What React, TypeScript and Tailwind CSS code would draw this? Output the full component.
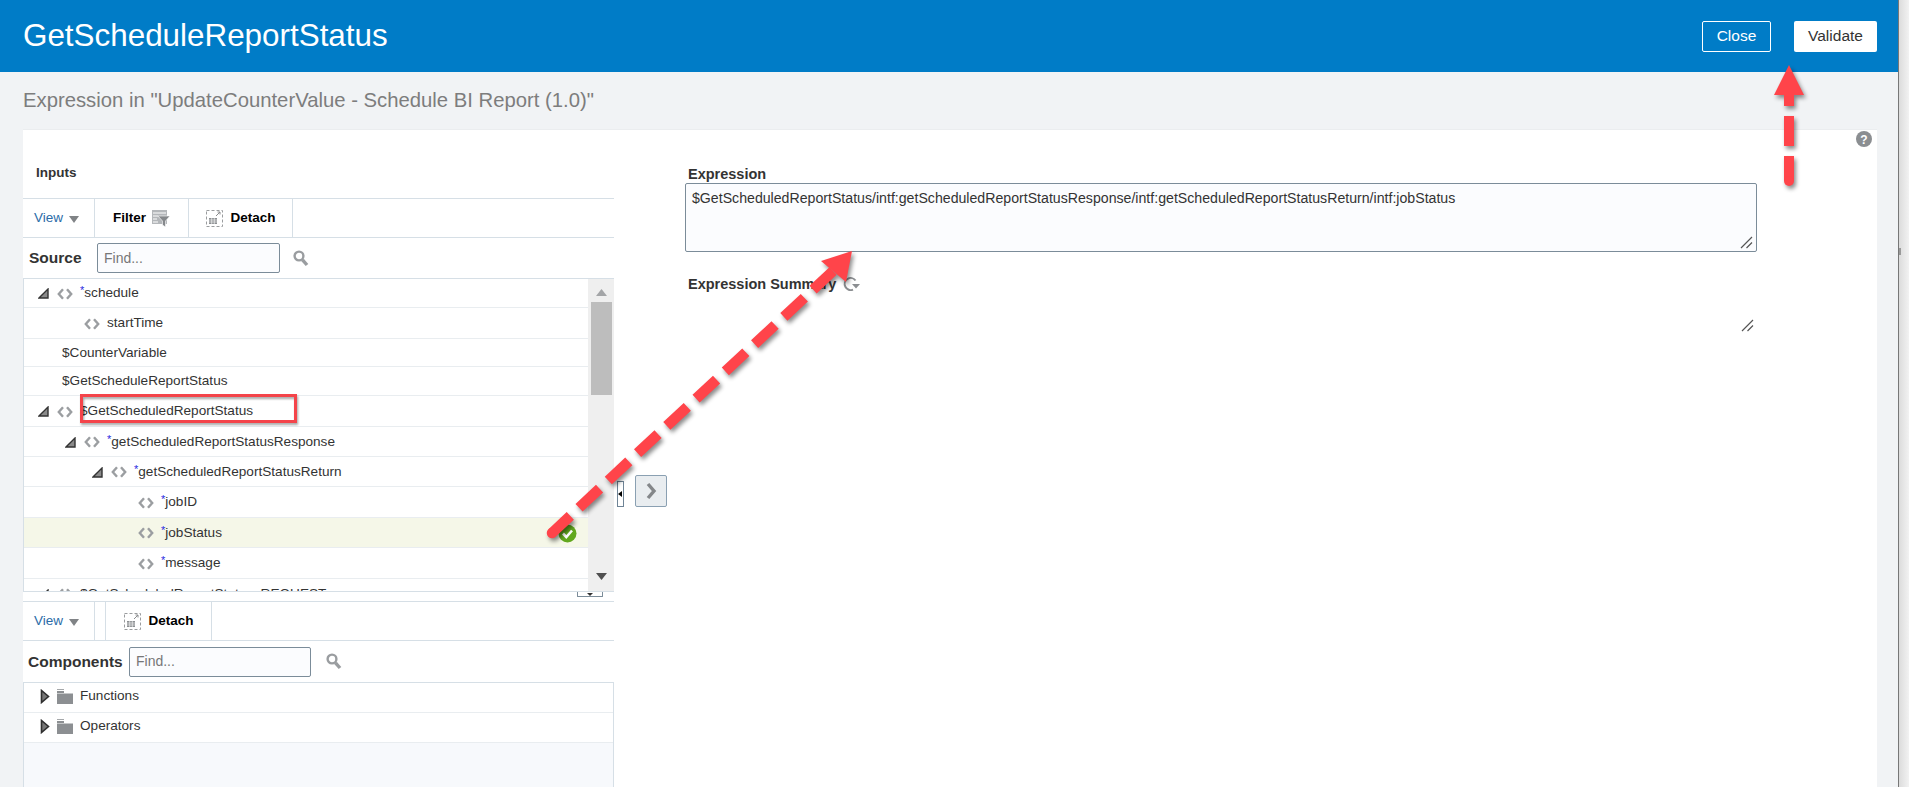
const Angle = ({ className = '' }: { className?: string }) => (
  <svg width="16" height="12" viewBox="0 0 16 12" className={className}>
    <path d="M6 1.2 1.8 6 6 10.8M10 1.2 14.2 6 10 10.8" fill="none" stroke="#9b9ea1" strokeWidth="2.4" />
  </svg>
);

const Expanded = () => (
  <svg width="11" height="11" viewBox="0 0 11 11">
    <path d="M10 1v9H1z" fill="#8a8a8a" stroke="#333" strokeWidth="1.4" />
  </svg>
);

const Collapsed = () => (
  <svg width="10" height="15" viewBox="0 0 10 15">
    <path d="M1.5 1.5v12L8.5 7.5z" fill="#777" stroke="#2f2f2f" strokeWidth="1.6" />
  </svg>
);

const Folder = () => (
  <svg width="16" height="15" viewBox="0 0 16 15">
    <path d="M0 2h7v2H0zM0 4.5h16V15H0z" fill="#8c8f92" />
    <path d="M0 0h7v1H0z" fill="#a5a8aa" />
  </svg>
);

const SearchIcon = () => (
  <svg width="16" height="17" viewBox="0 0 16 17">
    <circle cx="6" cy="6" r="4.4" fill="none" stroke="#9a9da0" strokeWidth="2.4" />
    <path d="M9.5 9.8 14 15" stroke="#9a9da0" strokeWidth="3.4" />
  </svg>
);

const FilterIcon = () => (
  <svg width="18" height="17" viewBox="0 0 18 17">
    <path d="M0 0h15v14H0z" fill="#b4b7ba" />
    <path d="M1 3h13M1 6h5M1 9h4M1 12h5" stroke="#fff" strokeWidth="1" />
    <path d="M6 6h12l-4.5 5v6l-3-2v-4z" fill="#85888b" stroke="#fff" strokeWidth="0.6" />
  </svg>
);

const DetachIcon = () => (
  <svg width="17" height="17" viewBox="0 0 17 17">
    <rect x="0.5" y="0.5" width="16" height="16" fill="none" stroke="#9a9c9e" strokeDasharray="3 2" />
    <path d="M3 8h8v6H3z" fill="#8c8f92" />
    <path d="M3 10h8M3 12h8M5.7 8v6M8.3 8v6" stroke="#fff" strokeWidth="0.6" />
    <path d="M10 6l4-4M11.5 2H14v2.5" fill="none" stroke="#8a8c8e" />
  </svg>
);

const Grip = () => (
  <svg width="13" height="13" viewBox="0 0 13 13">
    <path d="M1 12 12 1M6.5 12 12 6.5" stroke="#555" strokeWidth="1.2" />
  </svg>
);

const ViewMenu = () => (
  <div className="flex h-full w-[72px] items-center border-r border-[#d6dfe6] pl-[11px]">
    <span className="text-[13.5px] text-[#2b6ca8]">View</span>
    <svg width="10" height="7" viewBox="0 0 10 7" className="ml-[6px] mt-[2px]">
      <path d="M0 0h10L5 7z" fill="#808386" />
    </svg>
  </div>
);

const DetachButton = ({ width }: { width: string }) => (
  <div className={`flex h-full items-center justify-center gap-[7px] border-r border-[#d6dfe6] pl-[1px] ${width}`}>
    <DetachIcon />
    <span className="text-[13.5px] font-bold text-black">Detach</span>
  </div>
);

const FindBox = ({ width }: { width: string }) => (
  <div className={`flex h-[30px] items-center rounded-[2px] border border-[#7b8c99] bg-[#fbfcfe] pl-[6px] text-[14px] text-[#777] ${width}`}>
    Find...
  </div>
);

type Row = {
  text: string;
  star?: boolean;
  indent: number;
  kind: 'open' | 'leaf' | 'plain';
  h: string;
  selected?: boolean;
};

const rows: Row[] = [
  { text: 'schedule', star: true, indent: 14, kind: 'open', h: 'h-[29px]' },
  { text: 'startTime', indent: 60, kind: 'leaf', h: 'h-[31px]' },
  { text: '$CounterVariable', indent: 38, kind: 'plain', h: 'h-[28px]' },
  { text: '$GetScheduleReportStatus', indent: 38, kind: 'plain', h: 'h-[29px]' },
  { text: '$GetScheduledReportStatus', indent: 14, kind: 'open', h: 'h-[31px]' },
  { text: 'getScheduledReportStatusResponse', star: true, indent: 41, kind: 'open', h: 'h-[30px]' },
  { text: 'getScheduledReportStatusReturn', star: true, indent: 68, kind: 'open', h: 'h-[30px]' },
  { text: 'jobID', star: true, indent: 114, kind: 'leaf', h: 'h-[31px]' },
  { text: 'jobStatus', star: true, indent: 114, kind: 'leaf', h: 'h-[30px]', selected: true },
  { text: 'message', star: true, indent: 114, kind: 'leaf', h: 'h-[31px]' },
];

const TreeRow = ({ row }: { row: Row }) => (
  <div
    className={`relative flex shrink-0 items-center border-b border-[#e9edf0] pt-[1px] text-[13.6px] text-[#333] ${row.h} ${row.selected ? 'bg-[#f5f7e8]' : ''}`}
    style={{ paddingLeft: row.indent }}
  >
    {row.kind === 'open' && (
      <span className="mr-[8px] flex">
        <Expanded />
      </span>
    )}
    {row.kind !== 'plain' && <Angle className="mr-[7px]" />}
    {row.star && <span className="relative -top-[3px] text-[11px] leading-none text-[#2a2ae0]">*</span>}
    <span>{row.text}</span>
    {row.selected && (
      <svg width="19" height="19" viewBox="0 0 19 19" className="absolute right-[11px] top-[6px]">
        <circle cx="9.5" cy="9.5" r="9" fill="#62a81e" />
        <path d="M5 9.5 8.3 13 14 6.5" fill="none" stroke="#fff" strokeWidth="2.6" />
      </svg>
    )}
  </div>
);

export default function App() {
  return (
    <div className="relative flex h-[787px] w-[1909px] overflow-hidden bg-[#f0f0f0] font-['Liberation_Sans',Arial,sans-serif]">
      <div className="flex w-[1898px] shrink-0 flex-col bg-[#f1f3f5]">
        <header className="flex h-[72px] shrink-0 items-center justify-between bg-[#007cc7] pl-[23px] pr-[21px]">
          <h1 className="text-[31.4px] text-white">GetScheduleReportStatus</h1>
          <div className="flex gap-[23px]">
            <button className="h-[31px] w-[69px] rounded-[2px] border border-white text-[15.5px] text-white">Close</button>
            <button className="h-[31px] w-[83px] rounded-[2px] bg-white text-[15.5px] text-[#333]">Validate</button>
          </div>
        </header>

        <div className="flex h-[57px] shrink-0 items-center pl-[23px] text-[20.3px] text-[#7d7d7d]">
          Expression in "UpdateCounterValue - Schedule BI Report (1.0)"
        </div>

        <main className="relative ml-[23px] mr-[21px] flex min-h-0 flex-1 border-t border-[#ebedef] bg-white">
          <svg width="16" height="16" viewBox="0 0 16 16" className="absolute right-[5px] top-[1px]">
            <circle cx="8" cy="8" r="8" fill="#8b8e91" />
            <text x="8" y="12.5" textAnchor="middle" fontSize="12" fontWeight="700" fill="#fff">?</text>
          </svg>

          {/* inputs + components */}
          <section className="flex w-[591px] shrink-0 flex-col">
            <div className="h-[69px] shrink-0 border-b border-[#d6dfe6] pl-[13px] pt-[35px] text-[13.5px] font-bold leading-[16px] text-[#333]">
              Inputs
            </div>
            <div className="flex h-[39px] shrink-0 items-center border-b border-[#d6dfe6]">
              <ViewMenu />
              <div className="flex h-full w-[94px] items-center justify-center gap-[6px] border-r border-[#d6dfe6]">
                <span className="text-[13.5px] font-bold text-black">Filter</span>
                <FilterIcon />
              </div>
              <DetachButton width="w-[104px]" />
            </div>
            <div className="flex h-[40px] shrink-0 items-center">
              <span className="ml-[6px] w-[68px] text-[15.5px] font-bold text-[#333]">Source</span>
              <FindBox width="w-[183px]" />
              <span className="ml-[13px] flex"><SearchIcon /></span>
            </div>

            <div className="flex h-[314px] shrink-0 border-y border-l border-[#d6dfe6]">
              <div className="min-w-0 flex-1 overflow-hidden">
                {rows.map((row) => (
                  <TreeRow key={row.text} row={row} />
                ))}
                <div className="flex h-[30px] items-center pl-[14px] text-[13.6px] text-[#333]">
                  <span className="mr-[8px] flex"><Expanded /></span>
                  <Angle className="mr-[7px]" />
                  $GetScheduledReportStatus_REQUEST
                </div>
              </div>
              <div className="flex w-[26px] shrink-0 flex-col items-center bg-[#efefef]">
                <svg width="11" height="7" viewBox="0 0 11 7" className="mt-[10px]">
                  <path d="M0 7h11L5.5 0z" fill="#a3a5a7" />
                </svg>
                <div className="mt-[6px] h-[93px] w-[21px] bg-[#bdbdbd]" />
                <svg width="11" height="7" viewBox="0 0 11 7" className="mt-auto mb-[11px]">
                  <path d="M0 0h11L5.5 7z" fill="#4f4f4f" />
                </svg>
              </div>
            </div>

            <div className="relative h-[10px] shrink-0 border-b border-[#d6dfe6]">
              <div className="absolute right-[11px] top-0 flex h-[5px] w-[26px] justify-center rounded-b-[1px] border border-t-0 border-[#7b8c99]">
                <span className="mt-[1px] h-0 w-0 border-x-[3px] border-t-[3px] border-x-transparent border-t-[#333]" />
              </div>
            </div>
            <div className="flex h-[39px] shrink-0 items-center border-b border-[#d6dfe6]">
              <ViewMenu />
              <div className="h-full w-[11px] border-r border-[#d6dfe6]" />
              <DetachButton width="w-[106px]" />
            </div>
            <div className="flex h-[41px] shrink-0 items-center">
              <span className="ml-[5px] w-[101px] text-[15.5px] font-bold text-[#333]">Components</span>
              <FindBox width="w-[182px]" />
              <span className="ml-[15px] flex"><SearchIcon /></span>
            </div>
            <div className="min-h-0 flex-1 border-x border-t border-[#d6dfe6] bg-[#f7f9fc]">
              {['Functions', 'Operators'].map((name) => (
                <div key={name} className="flex h-[30px] items-center border-b border-[#e9edf0] bg-white pb-[2px] pl-[16px] text-[13.6px] text-[#333]">
                  <Collapsed />
                  <span className="ml-[7px] mr-[7px] flex"><Folder /></span>
                  {name}
                </div>
              ))}
            </div>
          </section>

          {/* splitter + shuttle button */}
          <div className="relative w-[71px] shrink-0">
            <div className="absolute left-[3px] top-[351px] flex h-[26px] w-[7px] items-center border border-[#6f8496] bg-white">
              <span className="h-0 w-0 border-y-[3px] border-r-[4px] border-y-transparent border-r-black" />
            </div>
            <div className="absolute left-[21px] top-[345px] flex h-[32px] w-[32px] items-center justify-center rounded-[2px] border border-[#8aa0b2] bg-[#e9edf0]">
              <svg width="12" height="18" viewBox="0 0 12 18">
                <path d="M3 2l6 7-6 7" fill="none" stroke="#84878a" strokeWidth="3.4" />
              </svg>
            </div>
          </div>

          {/* expression */}
          <section className="min-w-0 flex-1 pt-[36px]">
            <div className="pl-[3px] text-[14.5px] font-bold leading-[16px] text-[#333]">Expression</div>
            <div className="relative mt-[1px] h-[69px] w-[1072px] rounded-[2px] border border-[#7b8c99] bg-[#fbfcfe] pl-[6px] pt-[6px] text-[14.15px] leading-[16px] text-[#333]">
              $GetScheduledReportStatus/intf:getScheduledReportStatusResponse/intf:getScheduledReportStatusReturn/intf:jobStatus
              <span className="absolute bottom-[2px] right-[3px] flex"><Grip /></span>
            </div>
            <div className="mt-[24px] flex w-[1072px] items-center pl-[3px]">
              <span className="text-[14.5px] font-bold leading-[16px] text-[#333]">Expression Summary</span>
              <svg width="18" height="16" viewBox="0 0 18 16" className="ml-[6px]">
                <path d="M13.5 4.5A6 6 0 1 0 11 13.6" fill="none" stroke="#8b8e91" strokeWidth="2" />
                <path d="M10 8h8l-4 4.5z" fill="#8b8e91" />
              </svg>
            </div>
            <div className="mt-[27px] flex w-[1071px] justify-end pr-[2px]"><Grip /></div>
          </section>
        </main>
      </div>

      <div className="relative w-[11px] shrink-0 border-l border-[#777] bg-gradient-to-r from-[#dcdcdc] to-[#f2f2f2]">
        <div className="absolute left-0 top-[248px] h-[7px] w-[2px] bg-[#999]" />
      </div>

      {/* annotation arrows */}
      <svg width="1909" height="787" className="pointer-events-none absolute left-0 top-0 drop-shadow-[2px_3px_2px_rgba(0,0,0,0.45)]">
        <path d="M552 533 833 271" stroke="#ff444a" strokeWidth="10.5" strokeDasharray="28 12" strokeDashoffset="3" fill="none" />
        <circle cx="552" cy="533" r="5.25" fill="#ff444a" />
        <path d="M852 251 821 261 846 282z" fill="#ff444a" />
        <path d="M1789 106v-11M1789 146v-30M1789 181v-25" stroke="#ff444a" strokeWidth="10" fill="none" />
        <circle cx="1789" cy="181" r="5" fill="#ff444a" />
        <path d="M1789 65 1774 95h30z" fill="#ff444a" />
      </svg>
      <div className="pointer-events-none absolute left-[80px] top-[394px] h-[29px] w-[217px] border-[3px] border-[#f4444a] drop-shadow-[1px_2px_1px_rgba(0,0,0,0.35)]" />
    </div>
  );
}
